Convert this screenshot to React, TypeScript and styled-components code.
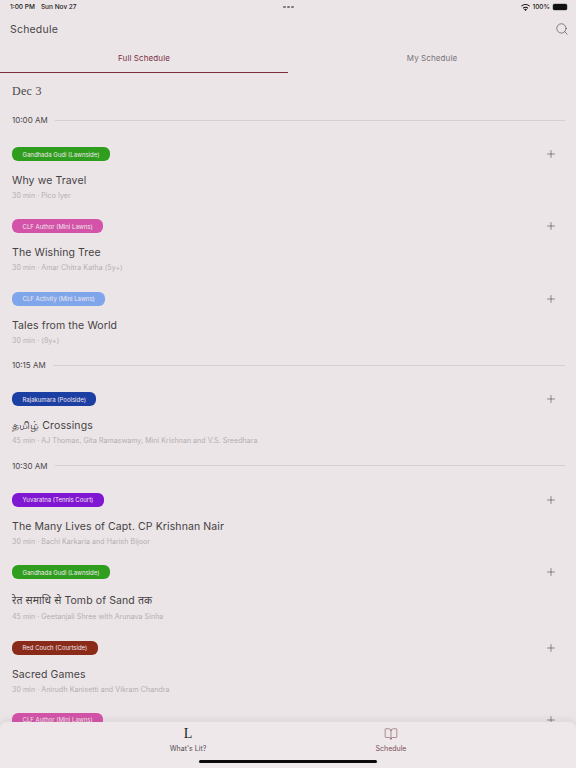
import React from "react";
import styled, { createGlobalStyle } from "styled-components";
import { Search, Plus, BookOpen } from "lucide-react";

const UI_FONT = `Inter, "Noto Sans", "DejaVu Sans", sans-serif`;

const GlobalStyle = createGlobalStyle`
  html, body {
    margin: 0;
    padding: 0;
    background: #ebe5e7;
  }
  * {
    box-sizing: border-box;
  }
`;

const Page = styled.div`
  position: relative;
  width: 576px;
  height: 768px;
  overflow: hidden;
  display: flex;
  flex-direction: column;
  background: #ebe5e7;
  font-family: ${UI_FONT};
`;

const StatusBar = styled.div`
  height: 14px;
  padding: 0 9px 0 10px;
  display: grid;
  grid-template-columns: 1fr auto 1fr;
  align-items: center;
  font-size: 6.5px;
  font-weight: 500;
  color: #1c1a1b;
`;

const StatusLeft = styled.div`
  display: flex;
  gap: 6px;
`;

const StatusDots = styled.div`
  display: flex;
  gap: 1.5px;
`;

const Dot = styled.span`
  width: 2.5px;
  height: 2.5px;
  border-radius: 50%;
  background: #77777a;
`;

const StatusRight = styled.div`
  display: flex;
  justify-content: flex-end;
  align-items: center;
  gap: 2px;
`;

const Battery = styled.span`
  width: 14px;
  height: 6px;
  margin-left: 1px;
  border-radius: 1.5px;
  background: #111;
  box-shadow: 0 0 0 0.5px #999;
`;

const Header = styled.header`
  height: 30px;
  padding: 0 7px 0 10px;
  display: flex;
  align-items: center;
  justify-content: space-between;
  font-size: 10.5px;
  letter-spacing: 0.2px;
  color: #4a4648;
`;

const Tabs = styled.nav`
  display: flex;
  height: 28.5px;
`;

const TabLink = styled.div<{ $active?: boolean }>`
  flex: 1;
  padding-top: 9px;
  text-align: center;
  font-size: 8px;
  line-height: 10px;
  letter-spacing: 0.1px;
  color: ${(p) => (p.$active ? "#7a2f3f" : "#77727a")};
  border-bottom: 1px solid ${(p) => (p.$active ? "#7d2c3c" : "transparent")};
`;

const Content = styled.main`
  flex: 1;
  padding: 0 11px 0 12px;
`;

const DateHeading = styled.h2`
  margin: 9.5px 0 0;
  font-family: "Liberation Serif", serif;
  font-size: 12px;
  line-height: 18px;
  font-weight: 400;
  letter-spacing: 0.3px;
  color: #4a4547;
`;

const TimeRow = styled.div<{ $first?: boolean }>`
  display: flex;
  align-items: center;
  gap: 7px;
  height: 12px;
  margin-top: ${(p) => (p.$first ? "14px" : "13.5px")};
  margin-bottom: 21px;
  font-size: 8px;
  color: #4a4648;
  &::after {
    content: "";
    flex: 1;
    height: 1px;
    background: #d4cfd1;
  }
`;

const EventRow = styled.article`
  position: relative;
  display: flex;
  flex-direction: column;
  align-items: flex-start;
  & + & {
    margin-top: 18.4px;
  }
`;

const Pill = styled.span<{ $color: string }>`
  height: 14px;
  padding: 0 10.5px;
  display: inline-flex;
  align-items: center;
  border-radius: 6px;
  background: ${(p) => p.$color};
  color: #f1e6ea;
  font-size: 6px;
  white-space: nowrap;
`;

const Title = styled.h3<{ $tall?: boolean }>`
  margin: 12px 0 0;
  font-size: 10.5px;
  line-height: ${(p) => (p.$tall ? "19px" : "16px")};
  font-weight: 400;
  letter-spacing: 0.1px;
  color: #464244;
`;

const Meta = styled.p`
  margin: 1px 0 0;
  font-size: 7px;
  line-height: 11px;
  letter-spacing: 0.07px;
  color: #b3aeb0;
`;

const AddButton = styled.span`
  position: absolute;
  top: 1px;
  right: 8px;
  display: flex;
  color: #2f2b2d;
`;

const TabBar = styled.footer`
  position: absolute;
  left: 0;
  right: 0;
  bottom: 0;
  height: 46px;
  padding: 3px 0 0 3px;
  display: flex;
  justify-content: center;
  background: #eee8ea;
  border-radius: 7px 7px 0 0;
  box-shadow: 0 -4px 5px rgba(120, 100, 105, 0.08);
`;

const BarItem = styled.div<{ $active?: boolean }>`
  width: 203px;
  display: flex;
  flex-direction: column;
  align-items: center;
  font-size: 7px;
  color: ${(p) => (p.$active ? "#7a4a55" : "#514d4f")};
`;

const BarIcon = styled.div`
  height: 17px;
  display: flex;
  align-items: center;
`;

const LitMark = styled.span`
  font-family: "Liberation Serif", serif;
  font-size: 14px;
  line-height: 17px;
  color: #221f20;
`;

const BarLabel = styled.span`
  margin-top: 2px;
  line-height: 9px;
`;

const HomeIndicator = styled.div`
  position: absolute;
  left: 199px;
  bottom: 5px;
  width: 178px;
  height: 3px;
  border-radius: 2px;
  background: #0b0b0b;
`;

const GREEN = "#2f9e1f";
const PINK = "#d353a9";
const SKY = "#7fa6ea";
const NAVY = "#1c3fa3";
const PURPLE = "#7f17d3";
const RUST = "#8a2a18";

const slots = [
  {
    time: "10:00 AM",
    events: [
      { pill: "Gandhada Gudi (Lawnside)", color: GREEN, title: "Why we Travel", meta: "30 min · Pico Iyer" },
      { pill: "CLF Author (Mini Lawns)", color: PINK, title: "The Wishing Tree", meta: "30 min · Amar Chitra Katha (5y+)" },
      { pill: "CLF Activity (Mini Lawns)", color: SKY, title: "Tales from the World", meta: "30 min · (8y+)" },
    ],
  },
  {
    time: "10:15 AM",
    events: [
      {
        pill: "Rajakumara (Poolside)",
        color: NAVY,
        title: "தமிழ் Crossings",
        meta: "45 min · AJ Thomas, Gita Ramaswamy, Mini Krishnan and V.S. Sreedhara",
      },
    ],
  },
  {
    time: "10:30 AM",
    events: [
      { pill: "Yuvaratna (Tennis Court)", color: PURPLE, title: "The Many Lives of Capt. CP Krishnan Nair", meta: "30 min · Bachi Karkaria and Harish Bijoor" },
      { pill: "Gandhada Gudi (Lawnside)", color: GREEN, title: "रेत समाधि से Tomb of Sand तक", meta: "45 min · Geetanjali Shree with Arunava Sinha", tall: true },
      { pill: "Red Couch (Courtside)", color: RUST, title: "Sacred Games", meta: "30 min · Anirudh Kanisetti and Vikram Chandra" },
      { pill: "CLF Author (Mini Lawns)", color: PINK, title: "", meta: "" },
    ],
  },
];

const WifiIcon = () => (
  <svg width="9" height="7" viewBox="0 0 18 14" fill="#111">
    <path d="M9 2C5.8 2 3 3.2 1 5.2L0 4C2.3 1.6 5.5 0 9 0s6.7 1.6 9 4l-1 1.2C15 3.2 12.200 2 9 2z" />
    <path d="M9 5.500c-2.200 0-4.200.9-5.600 2.300L4.800 9.300C5.900 8.200 7.400 7.600 9 7.600s3.100.6 4.200 1.700l1.400-1.500C13.200 6.400 11.200 5.500 9 5.500z" />
    <path d="M9 9.500c-1.200 0-2.300.5-3 1.200L9 14l3-3.300c-.7-.7-1.800-1.200-3-1.200z" />
  </svg>
);

export default function App() {
  return (
    <Page>
      <GlobalStyle />
      <StatusBar>
        <StatusLeft>
          <span>1:00 PM</span>
          <span>Sun Nov 27</span>
        </StatusLeft>
        <StatusDots>
          <Dot />
          <Dot />
          <Dot />
        </StatusDots>
        <StatusRight>
          <WifiIcon />
          <span>100%</span>
          <Battery />
        </StatusRight>
      </StatusBar>
      <Header>
        <span>Schedule</span>
        <Search size={14} strokeWidth={1} color="#3a3638" />
      </Header>
      <Tabs>
        <TabLink $active>Full Schedule</TabLink>
        <TabLink>My Schedule</TabLink>
      </Tabs>
      <Content>
        <DateHeading>Dec 3</DateHeading>
        {slots.map((slot, i) => (
          <section key={slot.time}>
            <TimeRow $first={i === 0}>{slot.time}</TimeRow>
            {slot.events.map((ev) => (
              <EventRow key={ev.pill + ev.title}>
                <Pill $color={ev.color}>{ev.pill}</Pill>
                {ev.title && <Title $tall={ev.tall}>{ev.title}</Title>}
                {ev.meta && <Meta>{ev.meta}</Meta>}
                <AddButton>
                  <Plus size={12} strokeWidth={1} />
                </AddButton>
              </EventRow>
            ))}
          </section>
        ))}
      </Content>
      <TabBar>
        <BarItem>
          <BarIcon>
            <LitMark>L</LitMark>
          </BarIcon>
          <BarLabel>What's Lit?</BarLabel>
        </BarItem>
        <BarItem $active>
          <BarIcon>
            <BookOpen size={14} strokeWidth={1} color="#7a4a55" />
          </BarIcon>
          <BarLabel>Schedule</BarLabel>
        </BarItem>
      </TabBar>
      <HomeIndicator />
    </Page>
  );
}
